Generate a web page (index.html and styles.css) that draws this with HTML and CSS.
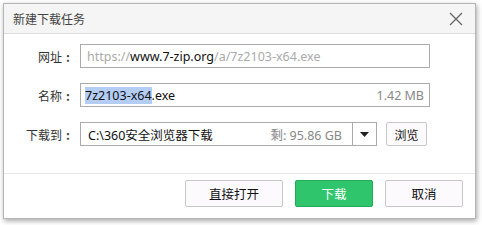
FILE: index.html
```html
<!DOCTYPE html>
<html lang="zh-CN">
<head>
<meta charset="utf-8">
<link rel="stylesheet" href="styles.css">
</head>
<body>
<div class="dialog">
  <div class="titlebar">
    <span class="title">新建下载任务</span>
    <svg class="close" width="14" height="14" viewBox="0 0 14 14"><path d="M1 1L13 13M13 1L1 13" stroke="#666" stroke-width="1.3" fill="none"/></svg>
  </div>
  <div class="content">
    <div class="row">
      <label class="lbl">网址<span class="colon">:</span></label>
      <div class="field url"><span class="dim">https://</span><span class="dark">www.7-zip.org</span><span class="dim">/a/7z2103-x64.exe</span></div>
    </div>
    <div class="row">
      <label class="lbl">名称<span class="colon">:</span></label>
      <div class="field name"><span><span class="sel">7z2103-x64</span>.exe</span><span class="size">1.42 MB</span></div>
    </div>
    <div class="row">
      <label class="lbl">下载到<span class="colon">:</span></label>
      <div class="pathwrap">
        <div class="field path"><span>C:\360安全浏览器下载</span><span class="size">剩: 95.86 GB</span></div>
        <div class="drop"><svg width="9" height="5" viewBox="0 0 9 5"><path d="M0 0H9L4.5 5Z" fill="#222"/></svg></div>
      </div>
      <button class="btn small">浏览</button>
    </div>
  </div>
  <div class="footer">
    <button class="btn">直接打开</button>
    <button class="btn primary">下载</button>
    <button class="btn">取消</button>
  </div>
</div>
</body>
</html>
```
FILE: styles.css
```css
* { box-sizing: border-box; }
html, body { margin: 0; padding: 0; background: #fff; }
body {
  width: 482px; height: 225px; overflow: hidden;
  font-family: "Noto Sans", "Noto Sans CJK SC", sans-serif;
  font-size: 12px; color: #333;
  padding: 3px 6px 6px 3px;
}
.dialog {
  width: 473px; height: 216px;
  border: 1px solid #b5b5b5;
  background: #fff;
  box-shadow: 1px 2px 5px rgba(0,0,0,0.35);
  display: flex; flex-direction: column;
}
.titlebar {
  height: 30px; background: #f5f5f5;
  border-bottom: 1px solid #dcdcdc;
  display: flex; align-items: center; justify-content: space-between;
  padding: 0 12px 0 9px;
}
.title { font-size: 12px; color: #444; font-family: "Noto Sans CJK SC", sans-serif; }
.close { display: block; }
.content {
  flex: 1;
  padding-top: 10px;
  display: flex; flex-direction: column; gap: 15px;
  border-bottom: 1px solid #e8e8e8;
}
.row { display: flex; align-items: center; height: 24px; }
.lbl {
  width: 70px; margin-right: 6px; text-align: right;
  font-family: "Noto Sans CJK SC", sans-serif; color: #333;
  display: flex; justify-content: flex-end; align-items: center;
}
.colon { display: inline-block; width: 12px; text-align: center; font-weight: bold; color: #444; }
.field {
  height: 24px; border: 1px solid #ababab; background: #fff;
  display: flex; align-items: center; justify-content: space-between;
  padding: 0 5px 0 4px; font-size: 12.5px; color: #111;
  white-space: nowrap; overflow: hidden;
}
.url, .name { width: 350px; }
.field.url { justify-content: flex-start; padding-left: 6px; }
.dim { color: #aaa; }
.dark { color: #111; }
.sel { background: #b4cdf5; }
.size { color: #888; }
.pathwrap { display: flex; width: 297px; }
.path { flex: 1; padding-left: 7px; padding-right: 10px; }
.drop {
  width: 24px; height: 24px; border: 1px solid #ababab; border-left: none;
  display: flex; align-items: center; justify-content: center;
}
.btn {
  font-family: "Noto Sans CJK SC", sans-serif; font-size: 12.5px; color: #111;
  background: #fdfafd; border: 1px solid #c8c8c8; border-radius: 2px;
  width: 98px; height: 27px; padding: 0; margin: 0;
}
.btn.small { width: 41px; height: 24px; margin-left: 9px; font-size: 12px; }
.btn.primary { background: #2ec56c; border-color: #22a95a; color: #fff; width: 78px; }
.footer {
  height: 44px; display: flex; justify-content: flex-end; align-items: flex-start;
  padding: 6px 12px 0 0; gap: 12px;
}
.footer .btn:last-child { width: 78px; }
```
